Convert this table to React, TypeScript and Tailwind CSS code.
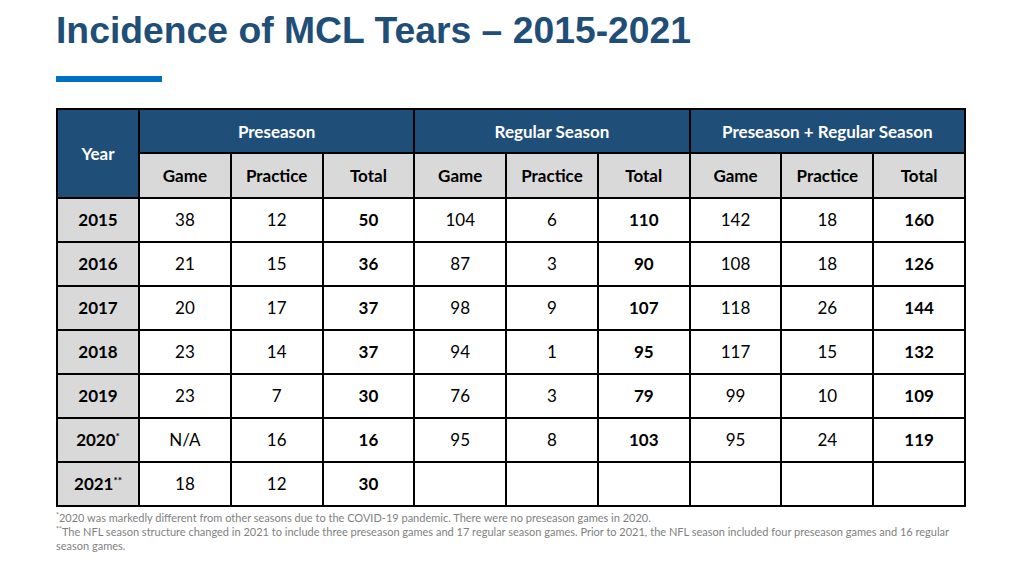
const subHeads = ["Game", "Practice", "Total"];

const rows: { year: string; sup?: string; values: string[] }[] = [
  { year: "2015", values: ["38", "12", "50", "104", "6", "110", "142", "18", "160"] },
  { year: "2016", values: ["21", "15", "36", "87", "3", "90", "108", "18", "126"] },
  { year: "2017", values: ["20", "17", "37", "98", "9", "107", "118", "26", "144"] },
  { year: "2018", values: ["23", "14", "37", "94", "1", "95", "117", "15", "132"] },
  { year: "2019", values: ["23", "7", "30", "76", "3", "79", "99", "10", "109"] },
  { year: "2020", sup: "*", values: ["N/A", "16", "16", "95", "8", "103", "95", "24", "119"] },
  { year: "2021", sup: "**", values: ["18", "12", "30", "", "", "", "", "", ""] },
];

const App = () => {
  return (
    <div className="w-[1024px] h-[576px] bg-white overflow-hidden pl-[56px] pt-[12px]">
      <h1 className="font-['Liberation_Sans',Arial,sans-serif] font-bold text-[37.3px] leading-none text-[#1f4e79]">
        Incidence of MCL Tears – 2015-2021
      </h1>
      <div className="mt-[27px] w-[106px] h-[6px] bg-[#0070c0]" />

      {/* Table */}
      <div className="mt-[26px] w-[910px] h-[399px] grid grid-cols-[80px_repeat(9,1fr)] grid-rows-[repeat(9,1fr)] gap-[2px] p-[2px] bg-black font-['Lato','Open_Sans',sans-serif] text-[17px] text-black">
        <div className="row-span-2 bg-[#1f4e79] text-white font-bold flex items-center justify-center">
          Year
        </div>
        <div className="col-span-3 bg-[#1f4e79] text-white font-bold flex items-center justify-center">
          Preseason
        </div>
        <div className="col-span-3 bg-[#1f4e79] text-white font-bold flex items-center justify-center">
          Regular Season
        </div>
        <div className="col-span-3 bg-[#1f4e79] text-white font-bold flex items-center justify-center">
          Preseason + Regular Season
        </div>
        {[0, 1, 2].flatMap((g) =>
          subHeads.map((h) => (
            <div key={`${g}-${h}`} className="bg-[#d9d9d9] font-bold flex items-center justify-center">
              {h}
            </div>
          ))
        )}
        {rows.map((r) => (
          <>
            <div key={r.year} className="bg-[#d9d9d9] font-bold flex items-center justify-center">
              <span>
                {r.year}
                {r.sup && <span className="relative -top-[6px] text-[10px] leading-none">{r.sup}</span>}
              </span>
            </div>
            {r.values.map((v, i) => (
              <div
                key={`${r.year}-${i}`}
                className={`bg-white flex items-center justify-center ${i % 3 === 2 ? "font-bold" : ""}`}
              >
                {v}
              </div>
            ))}
          </>
        ))}
      </div>

      {/* Footnotes */}
      <div className="mt-[4px] w-[910px] font-['Lato','Open_Sans',sans-serif] text-[11px] leading-[14px] text-[#7f7f7f]">
        <p>
          <span className="relative -top-[4px] text-[7px] leading-none">*</span>2020 was markedly different from other seasons due to the COVID-19 pandemic. There were no preseason games in 2020.
        </p>
        <p>
          <span className="relative -top-[4px] text-[7px] leading-none">**</span>The NFL season structure changed in 2021 to include three preseason games and 17 regular season games. Prior to 2021, the NFL season included four preseason games and 16 regular season games.
        </p>
      </div>
    </div>
  );
};

export default App;
